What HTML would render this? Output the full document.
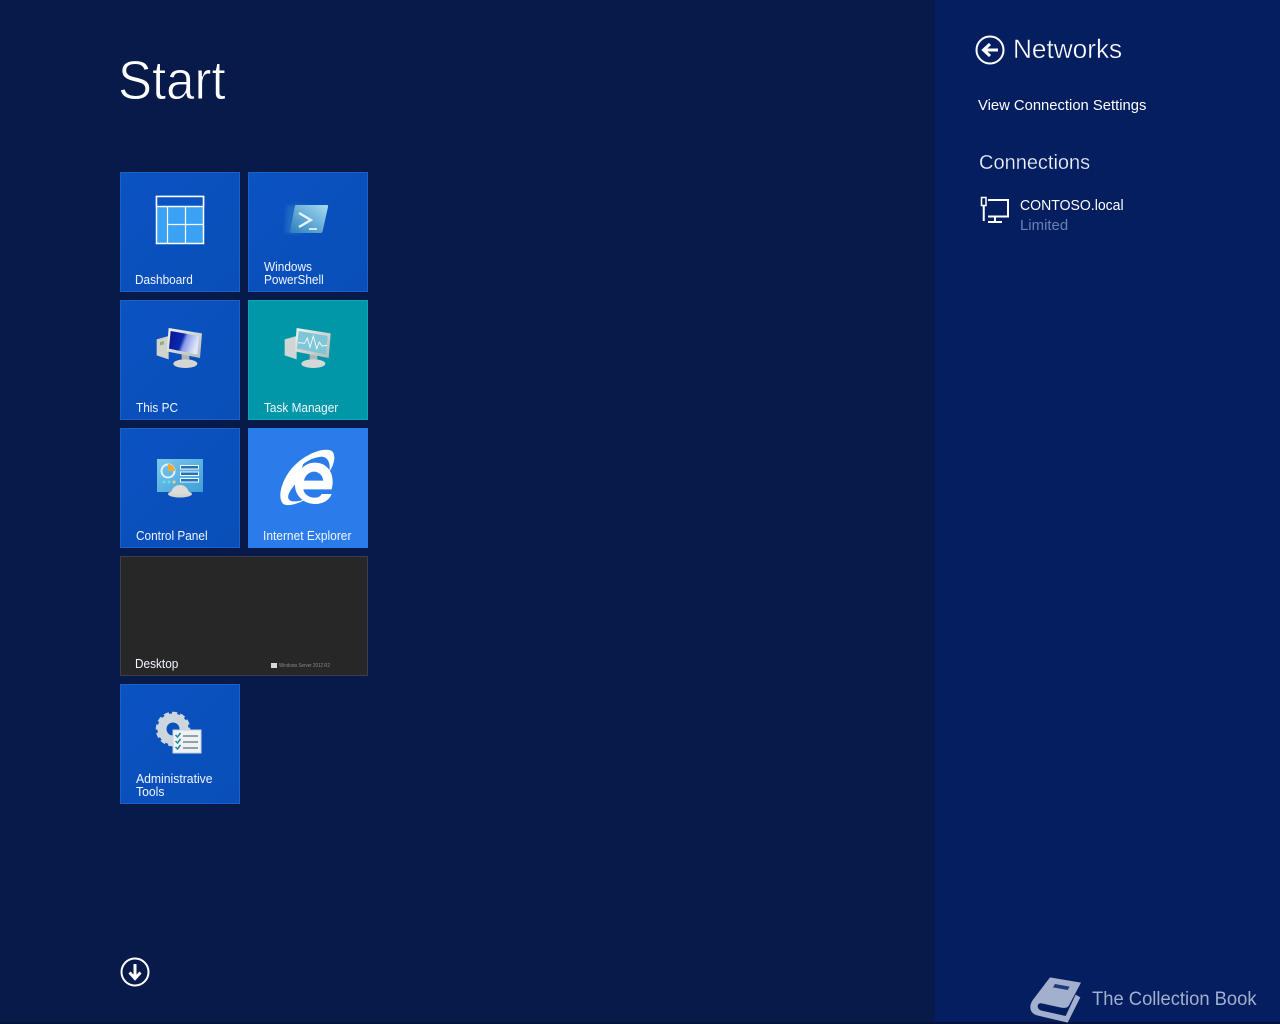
<!DOCTYPE html>
<html><head><meta charset="utf-8"><style>
html,body{margin:0;padding:0;width:1280px;height:1024px;overflow:hidden;background:#081a4a;font-family:"Liberation Sans",sans-serif;color:#fff}
.a{position:absolute;white-space:nowrap;transform-origin:0 0}
.t{position:absolute;width:118px;height:118px;border:1px solid #1a62c8;background:linear-gradient(135deg,#0b52c2,#0a4fb8)}
.l{position:absolute;font-size:12.5px;line-height:13px;white-space:nowrap;color:#f2f6ff;transform:scaleX(.945);transform-origin:0 0}
svg{position:absolute;overflow:visible}
.s{filter:blur(.35px)}
</style></head><body>
<svg width="0" height="0" style="left:0;top:0"><defs>
<linearGradient id="scr" x1="0" y1="0" x2="1" y2=".3"><stop offset="0" stop-color="#0a1590"/><stop offset=".5" stop-color="#0a2ab0"/><stop offset=".62" stop-color="#8a9ae8"/><stop offset="1" stop-color="#dfe6fa"/></linearGradient>
<linearGradient id="mon" x1="0" y1="0" x2="1" y2="1"><stop offset="0" stop-color="#f0f3f2"/><stop offset="1" stop-color="#b4bbb8"/></linearGradient>
<linearGradient id="ps" x1="0" y1="1" x2="1" y2="0"><stop offset="0" stop-color="#2b7dbd"/><stop offset="1" stop-color="#a6dcf0"/></linearGradient>
<linearGradient id="cp" x1="0" y1="0" x2="1" y2="1"><stop offset="0" stop-color="#7cc8ec"/><stop offset="1" stop-color="#3d9fd6"/></linearGradient>
</defs></svg>
<div class="a" style="left:935px;top:0;width:345px;height:1024px;background:#041e60"></div>
<div class="a" style="left:0;top:1022px;width:1280px;height:2px;background:#06123a"></div>
<div class="a" style="left:118px;top:49px;font-size:55px;line-height:62px;color:#fff;transform:scaleX(.927);-webkit-text-stroke:.9px #081a4a">Start</div>

<div class="t" style="left:120px;top:172px"></div>
<svg style="left:155px;top:195px" width="50" height="50"><rect x="1.500" y="1.500" width="47" height="47" fill="#3aa2f4" stroke="#fff" stroke-width="1.500"/><rect x="1.500" y="1.500" width="47" height="10" fill="#0b52c2" stroke="#fff" stroke-width="1.500"/><path d="M12.500 11V48M30.500 11V48M12.500 29.500H48" stroke="#fff" stroke-width="1.200" fill="none"/></svg>
<div class="l" style="left:135px;top:274px">Dashboard</div>

<div class="t" style="left:248px;top:172px"></div>
<svg class="s" style="left:284px;top:204px" width="46" height="32"><path d="M3 1H24L18 29H1Z" fill="#3a86cc" opacity=".45" style="filter:blur(2px)"/><path d="M11 1.500Q11.500 1 12.500 1H43Q44.500 1 44 3L38.500 27.500Q38 29 36.500 29H7.500Q5.500 29 6 27Z" fill="url(#ps)"/><path d="M15 9L27 16L15 23" stroke="#e8f6ff" stroke-width="2.200" fill="none"/><path d="M25 25H33" stroke="#cdeaf8" stroke-width="2"/></svg>
<div class="l" style="left:264px;top:261px">Windows<br>PowerShell</div>

<div class="t" style="left:120px;top:300px"></div>
<svg class="s" style="left:150px;top:320px" width="60" height="56" viewBox="0 0 180 168"><path d="M20 58L56 48V118L20 106Z" fill="#cfd3cc"/><path d="M30 66L42 63V73L30 76Z" fill="#8fb07a"/><path d="M95 100H118V124H95Z" fill="#aeb5b2"/><ellipse cx="106" cy="131" rx="36" ry="13" fill="#d3d6d2"/><path d="M56 24L156 40L150 114L50 94Z" fill="url(#mon)"/><path d="M62 33L147 48L142 104L57 86Z" fill="url(#scr)"/></svg>
<div class="l" style="left:136px;top:402px">This PC</div>

<div class="t" style="left:248px;top:300px;background:#0097a9;border-color:#12a5b6"></div>
<svg class="s" style="left:278px;top:320px" width="60" height="56" viewBox="0 0 180 168"><path d="M20 58L56 48V118L20 106Z" fill="#cfd6d4"/><path d="M95 100H118V124H95Z" fill="#aeb8b8"/><ellipse cx="106" cy="131" rx="36" ry="13" fill="#d3d8d6"/><path d="M56 24L158 40L152 114L50 94Z" fill="url(#mon)"/><path d="M62 33L149 48L144 104L57 86Z" fill="#7fc6d6"/><path d="M60 68L80 70L88 54L96 82L106 48L116 86L124 66L132 78L147 76" stroke="#fff" stroke-width="2.500" fill="none"/></svg>
<div class="l" style="left:264px;top:402px">Task Manager</div>

<div class="t" style="left:120px;top:428px"></div>
<svg class="s" style="left:156px;top:458px" width="48" height="42"><rect x="1" y="1" width="46" height="33" fill="url(#cp)"/><circle cx="12" cy="13" r="6.500" fill="none" stroke="#dff2ff" stroke-width="2"/><path d="M12 6A7 7 0 0 1 19 13H12Z" fill="#f0a83c"/><rect x="24.500" y="7.500" width="18" height="3.500" fill="#2a70b8" stroke="#eaf7ff"/><rect x="24.500" y="14" width="18" height="3.500" fill="#2a70b8" stroke="#eaf7ff"/><rect x="24.500" y="20.500" width="18" height="3.500" fill="#2a70b8" stroke="#eaf7ff"/><circle cx="8" cy="24" r="1.500" fill="#5fe0f0"/><circle cx="13" cy="24" r="1.500" fill="#5fe0f0"/><circle cx="18" cy="24" r="1.500" fill="#f0d090"/><ellipse cx="24" cy="36" rx="12" ry="3.500" fill="#d4d4d0"/><path d="M15 36A9 9 0 0 1 33 36Z" fill="#dcdcd8"/></svg>
<div class="l" style="left:136px;top:530px">Control Panel</div>

<div class="t" style="left:248px;top:428px;background:#2a7ceb;border-color:#2a7ceb"></div>
<svg class="s" style="left:270px;top:440px" width="76" height="76" viewBox="0 0 228 228"><path fill="#fff" fill-rule="evenodd" d="M185 148C187 140 188 132 188 125C188 90 165 68 135 68C100 68 75 100 75 135C75 170 105 192 135 192C160 192 178 180 185 162L155 162C150 170 143 173 135 173C120 173 103 165 100 148ZM102 122C105 105 120 95 132 95C145 95 158 105 160 122Z"/><path fill="#fff" d="M38 190C20 170 38 110 75 75C105 45 150 25 178 30C198 34 198 65 178 95C182 70 175 52 155 50C135 52 115 60 100 72L78 130C60 150 48 170 58 180C68 188 92 184 115 174C85 192 50 202 38 190Z"/></svg>
<div class="l" style="left:263px;top:530px;transform:scaleX(.957)">Internet Explorer</div>

<div class="t" style="left:120px;top:556px;width:246px;background:#272727;border-color:#3a3f48"></div>
<div class="l" style="left:135px;top:658px">Desktop</div>
<div class="a" style="left:271px;top:663px;width:6px;height:5px;background:#d8d8d8"></div>
<div class="a" style="left:279px;top:663px;font-size:5px;line-height:6px;color:#8a8a8a;transform:scaleX(.9)">Windows Server 2012 R2</div>

<div class="t" style="left:120px;top:684px"></div>
<svg class="s" style="left:156px;top:709px" width="48" height="46"><circle cx="17" cy="20" r="11" fill="none" stroke="#cdd6de" stroke-width="9"/><circle cx="17" cy="20" r="15.500" fill="none" stroke="#cdd6de" stroke-width="3.500" stroke-dasharray="5 3"/><rect x="17" y="21" width="28" height="23" fill="#eef2f4" stroke="#c8d4dc"/><path d="M19.500 26L21.500 28L24.500 24M19.500 32L21.500 34L24.500 30M19.500 38L21.500 40L24.500 36" stroke="#1b8a9a" stroke-width="1.500" fill="none"/><path d="M27 27H42M27 33H42M27 39H42" stroke="#77858f" stroke-width="1.500"/></svg>
<div class="l" style="left:136px;top:773px;transform:scaleX(.975)">Administrative<br>Tools</div>

<svg style="left:120px;top:957px" width="30" height="30"><circle cx="15" cy="15" r="13.500" fill="none" stroke="#fff" stroke-width="2"/><path d="M15 7V21M9.500 15.500L15 21.500L20.500 15.500" fill="none" stroke="#fff" stroke-width="3"/></svg>

<svg style="left:975px;top:35px" width="30" height="30"><circle cx="15" cy="15" r="13.500" fill="none" stroke="#fff" stroke-width="2"/><path d="M23 15H9M15 9L8.500 15L15 21" fill="none" stroke="#fff" stroke-width="3"/></svg>
<div class="a" style="left:1013px;top:33px;font-size:27px;line-height:33px;transform:scaleX(.97);-webkit-text-stroke:.4px #041e60">Networks</div>
<div class="a" style="left:978px;top:97px;font-size:14.800px;line-height:18px">View Connection Settings</div>
<div class="a" style="left:979px;top:151px;font-size:20px;line-height:24px;color:#eef2fb;-webkit-text-stroke:.25px #041e60">Connections</div>
<svg style="left:980px;top:196px" width="30" height="28"><rect x="1.500" y="1.500" width="4.500" height="8" fill="none" stroke="#fff" stroke-width="1.500"/><path d="M3.750 10V25" stroke="#fff" stroke-width="2"/><path d="M8 4H28V20.500H8" fill="none" stroke="#fff" stroke-width="2"/><path d="M15 20.500V26M8 26H22" stroke="#fff" stroke-width="2"/></svg>
<div class="a" style="left:1020px;top:197px;font-size:15px;line-height:18px;transform:scaleX(.937)">CONTOSO.local</div>
<div class="a" style="left:1020px;top:217px;font-size:14.500px;line-height:18px;color:#6d80b4;transform:scaleX(1.03)">Limited</div>

<svg class="s" style="left:1025px;top:970px" width="64" height="54" viewBox="0 0 192 162"><path fill="#a2afcd" d="M75 22L168 38L132 106C126 116 116 114 105 112L50 100C34 98 34 118 50 122L122 138L152 74L166 82L128 158L36 136C16 130 10 112 22 92Z"/><path fill="#1f3a7e" d="M90 42L134 50L128 60L84 52Z"/></svg>
<div class="a" style="left:1092px;top:987px;font-size:19.500px;line-height:24px;color:#a2afcd;transform:scaleX(.943)">The Collection Book</div>
</body></html>
